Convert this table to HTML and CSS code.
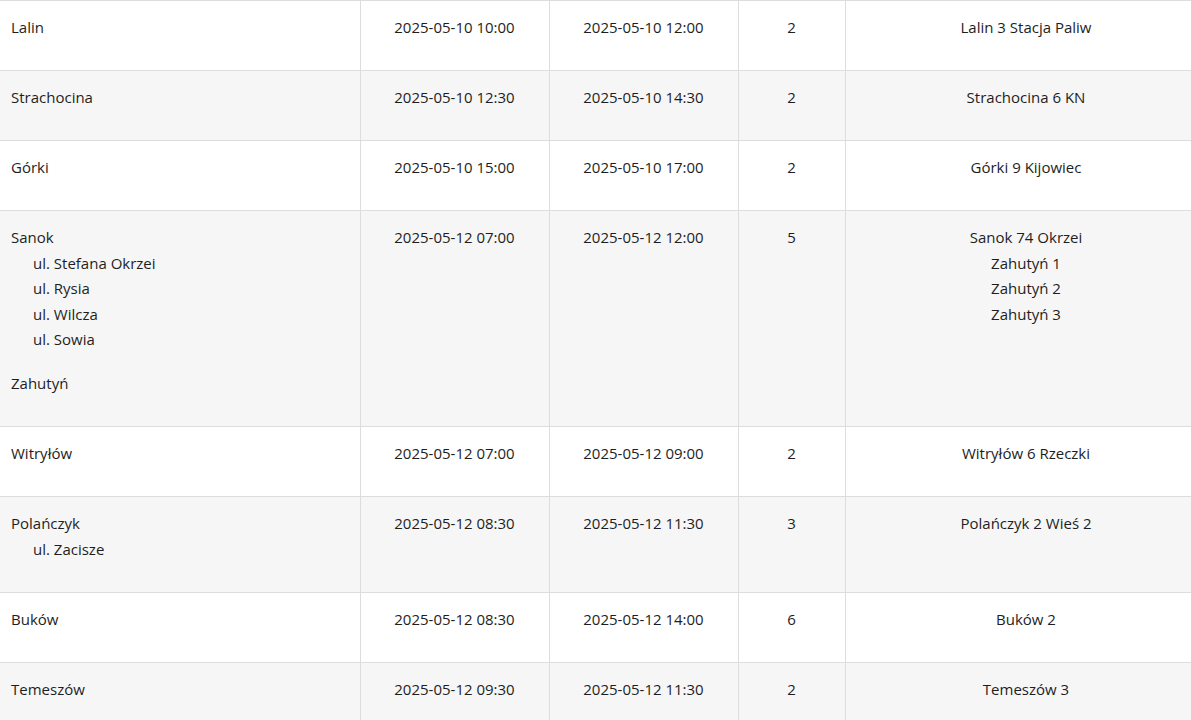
FILE: index.html
```html
<!DOCTYPE html>
<html lang="pl">
<head>
<meta charset="utf-8">
<title>Harmonogram</title>
<link rel="stylesheet" href="styles.css">
</head>
<body>
<table class="schedule">
  <colgroup>
    <col class="c-place">
    <col class="c-date">
    <col class="c-date">
    <col class="c-num">
    <col class="c-station">
  </colgroup>
  <tbody>
    <tr>
      <td class="place"><div class="loc"><div>Lalin</div></div></td>
      <td>2025-05-10 10:00</td>
      <td>2025-05-10 12:00</td>
      <td>2</td>
      <td>Lalin 3 Stacja Paliw</td>
    </tr>
    <tr>
      <td class="place"><div class="loc"><div>Strachocina</div></div></td>
      <td>2025-05-10 12:30</td>
      <td>2025-05-10 14:30</td>
      <td>2</td>
      <td>Strachocina 6 KN</td>
    </tr>
    <tr>
      <td class="place"><div class="loc"><div>Górki</div></div></td>
      <td>2025-05-10 15:00</td>
      <td>2025-05-10 17:00</td>
      <td>2</td>
      <td>Górki 9 Kijowiec</td>
    </tr>
    <tr>
      <td class="place">
        <div class="loc">
          <div>Sanok</div>
          <div class="streets">
            <div>ul. Stefana Okrzei</div>
            <div>ul. Rysia</div>
            <div>ul. Wilcza</div>
            <div>ul. Sowia</div>
          </div>
        </div>
        <div class="loc"><div>Zahutyń</div></div>
      </td>
      <td>2025-05-12 07:00</td>
      <td>2025-05-12 12:00</td>
      <td>5</td>
      <td>
        <div>Sanok 74 Okrzei</div>
        <div>Zahutyń 1</div>
        <div>Zahutyń 2</div>
        <div>Zahutyń 3</div>
      </td>
    </tr>
    <tr>
      <td class="place"><div class="loc"><div>Witryłów</div></div></td>
      <td>2025-05-12 07:00</td>
      <td>2025-05-12 09:00</td>
      <td>2</td>
      <td>Witryłów 6 Rzeczki</td>
    </tr>
    <tr>
      <td class="place">
        <div class="loc">
          <div>Polańczyk</div>
          <div class="streets"><div>ul. Zacisze</div></div>
        </div>
      </td>
      <td>2025-05-12 08:30</td>
      <td>2025-05-12 11:30</td>
      <td>3</td>
      <td>Polańczyk 2 Wieś 2</td>
    </tr>
    <tr>
      <td class="place"><div class="loc"><div>Buków</div></div></td>
      <td>2025-05-12 08:30</td>
      <td>2025-05-12 14:00</td>
      <td>6</td>
      <td>Buków 2</td>
    </tr>
    <tr>
      <td class="place"><div class="loc"><div>Temeszów</div></div></td>
      <td>2025-05-12 09:30</td>
      <td>2025-05-12 11:30</td>
      <td>2</td>
      <td>Temeszów 3</td>
    </tr>
  </tbody>
</table>
</body>
</html>
```

FILE: styles.css
```css
html, body {
  margin: 0;
  padding: 0;
  overflow: hidden;
  background: #ffffff;
}

body {
  font-family: "Open Sans", "Noto Sans", "Liberation Sans", sans-serif;
  font-size: 15px;
  line-height: 25.5px;
  color: #1e1e1e;
}

.schedule {
  border-collapse: collapse;
  table-layout: fixed;
  width: 1207px;
}

.c-place { width: 360px; }
.c-date { width: 189px; }
.c-num { width: 107px; }
.c-station { width: 362px; }

.schedule td {
  border: 1px solid #dddddd;
  padding: 14px 10px 29.5px;
  vertical-align: top;
  text-align: center;
}

.schedule td:first-child {
  border-left: none;
}

.schedule td.place {
  text-align: left;
  padding-left: 11px;
}

.schedule tr:nth-child(even) td {
  background: #f6f6f6;
}

.loc + .loc {
  margin-top: 18.5px;
}

.streets {
  padding-left: 22px;
}
```
